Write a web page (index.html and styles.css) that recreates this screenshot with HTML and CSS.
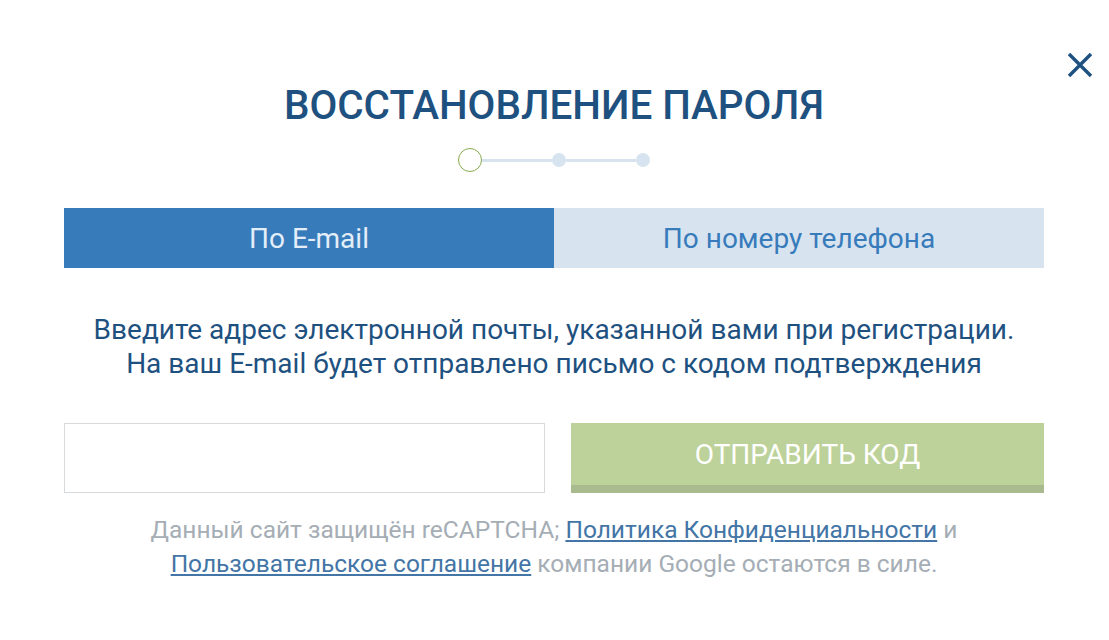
FILE: index.html
```html
<!DOCTYPE html>
<html lang="ru">
<head>
<meta charset="utf-8">
<link rel="stylesheet" href="styles.css">
</head>
<body>
<div class="modal">
  <button class="close" aria-label="Закрыть">
    <svg width="26" height="26" viewBox="0 0 26 26"><path d="M2 2 L24 24 M24 2 L2 24" stroke="#1e5180" stroke-width="3.4" fill="none"/></svg>
  </button>
  <h1 class="title">ВОССТАНОВЛЕНИЕ ПАРОЛЯ</h1>
  <div class="steps">
    <span class="step step-active"></span>
    <span class="line"></span>
    <span class="step"></span>
    <span class="line"></span>
    <span class="step"></span>
  </div>
  <div class="tabs">
    <div class="tab tab-active">По E-mail</div>
    <div class="tab">По номеру телефона</div>
  </div>
  <p class="desc">Введите адрес электронной почты, указанной вами при регистрации.<br>На ваш E-mail будет отправлено письмо с кодом подтверждения</p>
  <div class="form">
    <input class="input" type="text">
    <button class="submit">ОТПРАВИТЬ КОД</button>
  </div>
  <p class="note">Данный сайт защищён reCAPTCHA; <a href="#">Политика Конфиденциальности</a> и<br><a href="#">Пользовательское соглашение</a> компании Google остаются в силе.</p>
</div>
</body>
</html>
```
FILE: styles.css
```css
html, body { margin: 0; padding: 0; background: #fff; }
body { font-family: Roboto, "Noto Sans", sans-serif; }
.modal {
  position: relative;
  width: 980px;
  margin: 0 0 0 64px;
  padding-top: 83px;
}
.close {
  position: absolute;
  top: 52px;
  right: -49px;
  background: none;
  border: 0;
  padding: 0;
  width: 26px;
  height: 26px;
  cursor: pointer;
}
.close svg { display: block; }
.title {
  margin: 0;
  text-align: center;
  font-weight: 500;
  font-size: 40.4px;
  line-height: 46px;
  color: #1e5180;
}
.steps {
  display: flex;
  align-items: center;
  justify-content: center;
  margin-top: 19px;
  height: 24px;
}
.step {
  width: 14px;
  height: 14px;
  border-radius: 50%;
  background: #d7e4f0;
  flex: none;
}
.step-active {
  width: 22px;
  height: 22px;
  background: #fff;
  border: 1px solid #8aab4f;
}
.line {
  width: 70px;
  height: 3px;
  background: #d7e4f0;
  flex: none;
}
.tabs {
  display: flex;
  margin-top: 36px;
}
.tab {
  flex: 1;
  height: 60px;
  display: flex;
  align-items: center;
  justify-content: center;
  background: #d7e4f0;
  color: #387bbb;
  font-size: 28px;
}
.tab-active {
  background: #387bbb;
  color: #e3eef8;
}
.desc {
  margin: 45px 0 0;
  text-align: center;
  color: #1e5180;
  font-size: 28px;
  line-height: 34px;
}
.form {
  display: flex;
  gap: 26px;
  margin-top: 42px;
}
.input {
  box-sizing: border-box;
  width: 481px;
  height: 70px;
  border: 1px solid #d6dadd;
  margin: 0;
  padding: 0 16px;
  font: inherit;
  outline: none;
}
.submit {
  flex: 1;
  height: 70px;
  border: 0;
  margin: 0;
  background: #bdd29a;
  box-shadow: inset 0 -8px 0 #a8ba8e;
  color: #fff;
  font-family: Roboto, sans-serif;
  font-size: 28px;
  padding: 0 0 8px;
  cursor: pointer;
}
.note {
  margin: 20px 0 0;
  text-align: center;
  color: #a5adb5;
  font-size: 24.5px;
  line-height: 34px;
}
.note a {
  color: #4375a6;
  text-decoration: underline;
}
```
